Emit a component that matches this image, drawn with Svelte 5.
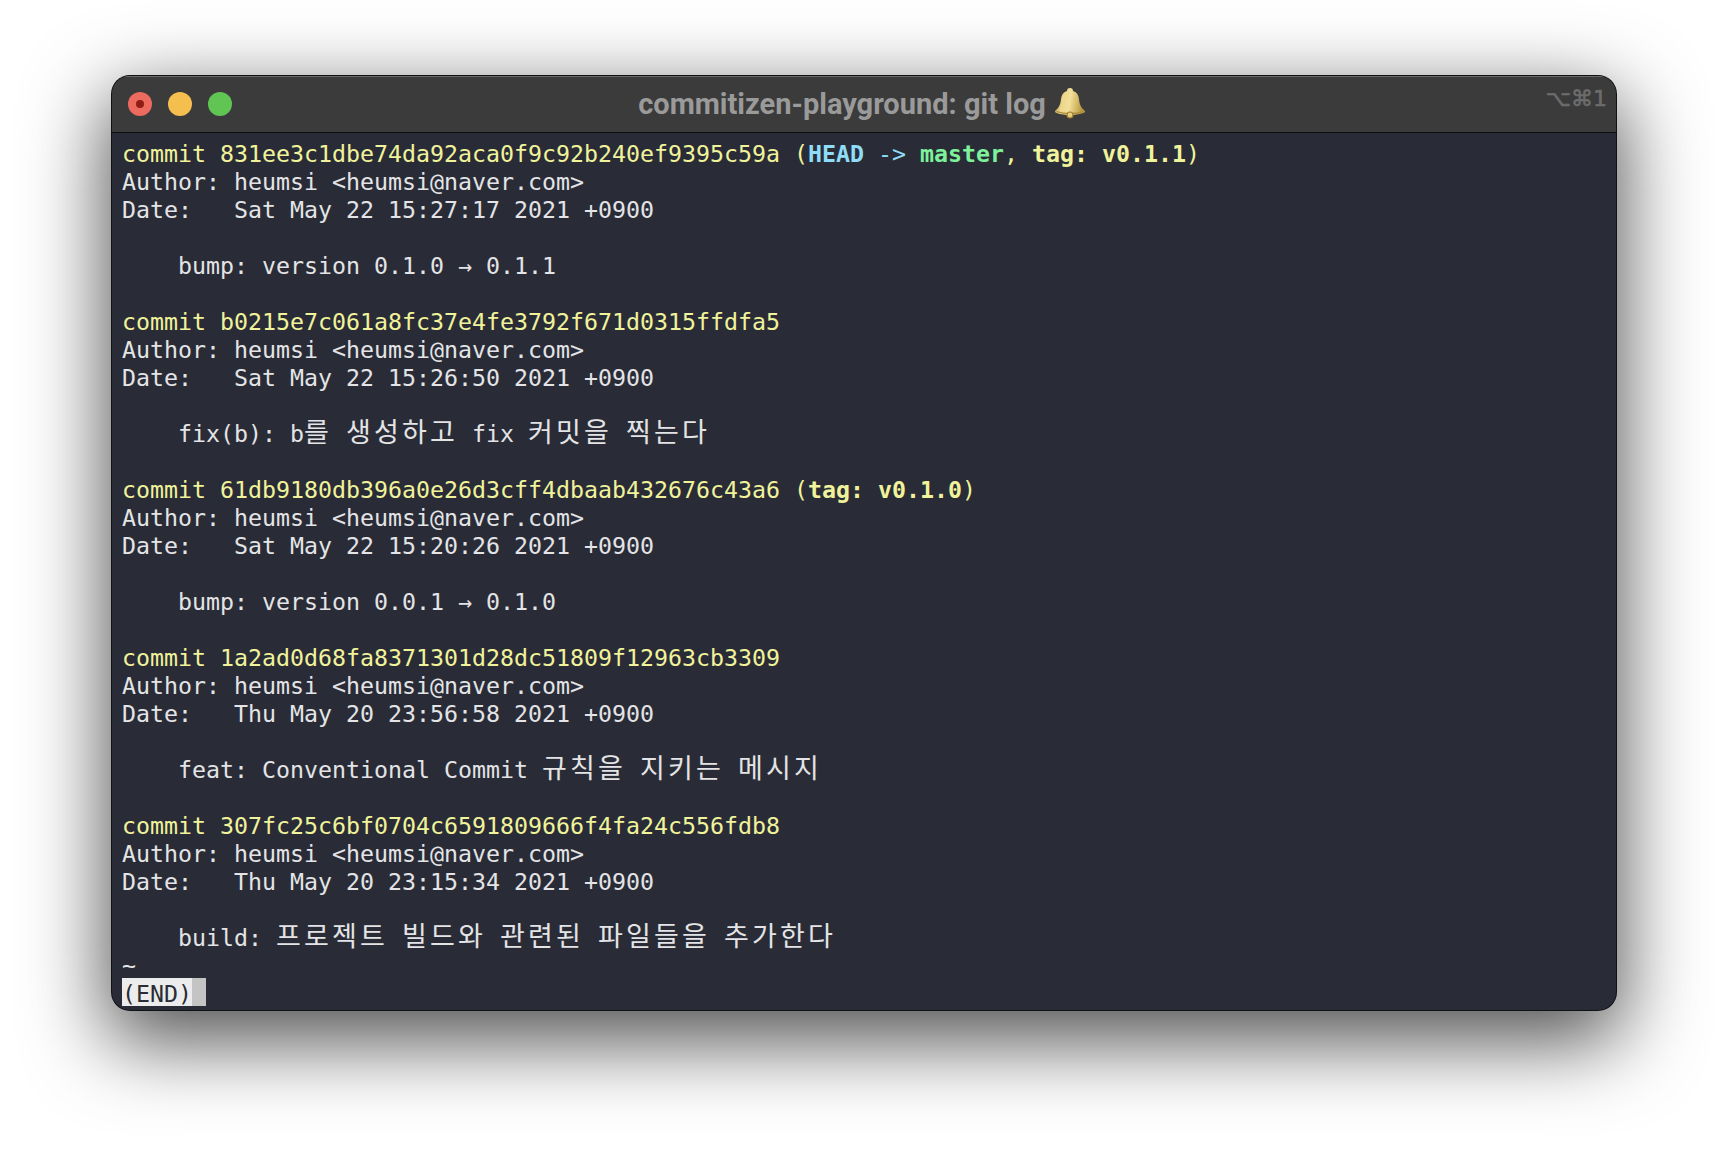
<script>
  const commits = [
    { hash: '831ee3c1dbe74da92aca0f9c92b240ef9395c59a', head: true, tag: 'v0.1.1', date: 'Sat May 22 15:27:17 2021 +0900', msg: 'bump: version 0.1.0 → 0.1.1' },
    { hash: 'b0215e7c061a8fc37e4fe3792f671d0315ffdfa5', date: 'Sat May 22 15:26:50 2021 +0900', msg: 'fix(b): b를 생성하고 fix 커밋을 찍는다' },
    { hash: '61db9180db396a0e26d3cff4dbaab432676c43a6', tag: 'v0.1.0', date: 'Sat May 22 15:20:26 2021 +0900', msg: 'bump: version 0.0.1 → 0.1.0' },
    { hash: '1a2ad0d68fa8371301d28dc51809f12963cb3309', date: 'Thu May 20 23:56:58 2021 +0900', msg: 'feat: Conventional Commit 규칙을 지키는 메시지' },
    { hash: '307fc25c6bf0704c6591809666f4fa24c556fdb8', date: 'Thu May 20 23:15:34 2021 +0900', msg: 'build: 프로젝트 빌드와 관련된 파일들을 추가한다' }
  ];

  // hangul takes two terminal cells, so it gets its own span
  function split(msg) {
    return ('    ' + msg).split(/([\uAC00-\uD7A3]+)/);
  }
</script>

<div class="page">
  <div class="window">
    <header class="titlebar">
      <div class="lights">
        <span class="light red"><i></i></span>
        <span class="light yellow"></span>
        <span class="light green"></span>
      </div>
      <div class="title">
        commitizen-playground: git log
        <svg class="bell" viewBox="0 0 32 32" width="32" height="32">
          <defs>
            <linearGradient id="gold" x1="0" y1="0" x2="1" y2="0.15">
              <stop offset="0" stop-color="#a88c45" />
              <stop offset="0.3" stop-color="#ecd688" />
              <stop offset="0.55" stop-color="#f2e09a" />
              <stop offset="0.85" stop-color="#cfb15c" />
              <stop offset="1" stop-color="#b59643" />
            </linearGradient>
          </defs>
          <path d="M13 4a3 3 0 0 1 6 0c3.500 1 5.500 3.500 6 8 .5 5 1.500 8 5.500 11.500 1 1 .5 2-1 2.500-4.500 1.500-9.500 2-13.500 2s-9-.5-13.500-2c-1.500-.5-2-1.500-1-2.500C5.500 20 6.500 17 7 12c.5-4.500 2.500-7 6-8z" fill="url(#gold)" />
          <path d="M2.500 24.500c4 1.500 9 2.200 13.500 2.200s9.500-.7 13.500-2.200" fill="none" stroke="#a98a3c" stroke-width="1.200" />
          <circle cx="16" cy="28" r="3" fill="#e8cf7a" stroke="#a07c2e" stroke-width="1.200" />
        </svg>
      </div>
      <div class="shortcut">⌥⌘1</div>
    </header>

    <main class="term">
      {#each commits as c, i}
        <div class="row yellow-text">commit {c.hash}{#if c.head || c.tag}{' ('}{#if c.head}<b class="cyan">HEAD</b><span class="cyan">{' -> '}</span><b class="mint">master</b>{', '}{/if}<b>tag: {c.tag}</b>){/if}</div>
        <div class="row">Author: heumsi &lt;heumsi@naver.com&gt;</div>
        <div class="row">Date:   {c.date}</div>
        <div class="row"></div>
        <div class="row">{#each split(c.msg) as part, k}{#if k % 2}<span class="ko">{part}</span>{:else}{part}{/if}{/each}</div>
        {#if i < commits.length - 1}<div class="row"></div>{/if}
      {/each}
      <div class="row">~</div>
      <div class="row"><span class="end">(END)</span><span class="cursor">{' '}</span></div>
    </main>
  </div>
</div>

<style>
  :global(body) {
    background: #fff;
  }
  .page {
    padding: 76px 112px 148px;
  }
  .window {
    height: 934px;
    box-sizing: border-box;
    display: flex;
    flex-direction: column;
    overflow: hidden;
    border-radius: 18px;
    background: #292c37;
    box-shadow: 0 0 0 1px #111, 0 26px 80px 6px rgba(0, 0, 0, 0.68);
  }
  .titlebar {
    flex: none;
    height: 57px;
    box-sizing: border-box;
    padding-bottom: 2px;
    display: grid;
    grid-template-columns: 1fr auto 1fr;
    align-items: center;
    background: #3b3b3b;
    border-top: 1px solid #6a6a6a;
    border-bottom: 1px solid #0d0d0d;
  }
  .lights {
    display: flex;
    gap: 16px;
    padding-left: 16px;
  }
  .light {
    width: 24px;
    height: 24px;
    border-radius: 50%;
    display: flex;
    align-items: center;
    justify-content: center;
  }
  .light i {
    width: 8px;
    height: 8px;
    border-radius: 50%;
    background: #8e1d12;
  }
  .red { background: #ec6a5e; }
  .yellow { background: #f4bf4f; }
  .green { background: #61c554; }
  .title {
    display: flex;
    align-items: center;
    gap: 8px;
    padding-right: 4px;
    font-family: Roboto, sans-serif;
    font-weight: 700;
    font-size: 29px;
    color: #9a9a9a;
    white-space: nowrap;
  }
  .bell {
    margin-top: -2px;
  }
  .shortcut {
    justify-self: end;
    padding: 0 9px 10px 0;
    font-family: 'DejaVu Sans', sans-serif;
    font-size: 22px;
    color: #6c6c6c;
    -webkit-text-stroke: 0.6px #6c6c6c;
  }
  .term {
    flex: 1;
    padding: 5px 0 0 10px;
    font-family: 'DejaVu Sans Mono', 'Noto Sans CJK KR', monospace;
    font-size: 23.250px;
    color: #e4e4e6;
  }
  .row {
    height: 28px;
    line-height: 32px;
    white-space: pre;
  }
  .yellow-text {
    color: #f1f39a;
  }
  .cyan {
    color: #8fdcf8;
  }
  .mint {
    color: #7ef29a;
  }
  .ko {
    font-family: 'Noto Sans CJK KR', sans-serif;
    font-size: 27px;
    line-height: 0;
    letter-spacing: 3.160px;
  }
  .end,
  .cursor {
    display: inline-block;
    height: 28px;
    vertical-align: top;
  }
  .end {
    background: #ececec;
    color: #2a2c36;
  }
  .cursor {
    background: #c4c4c4;
  }
</style>
